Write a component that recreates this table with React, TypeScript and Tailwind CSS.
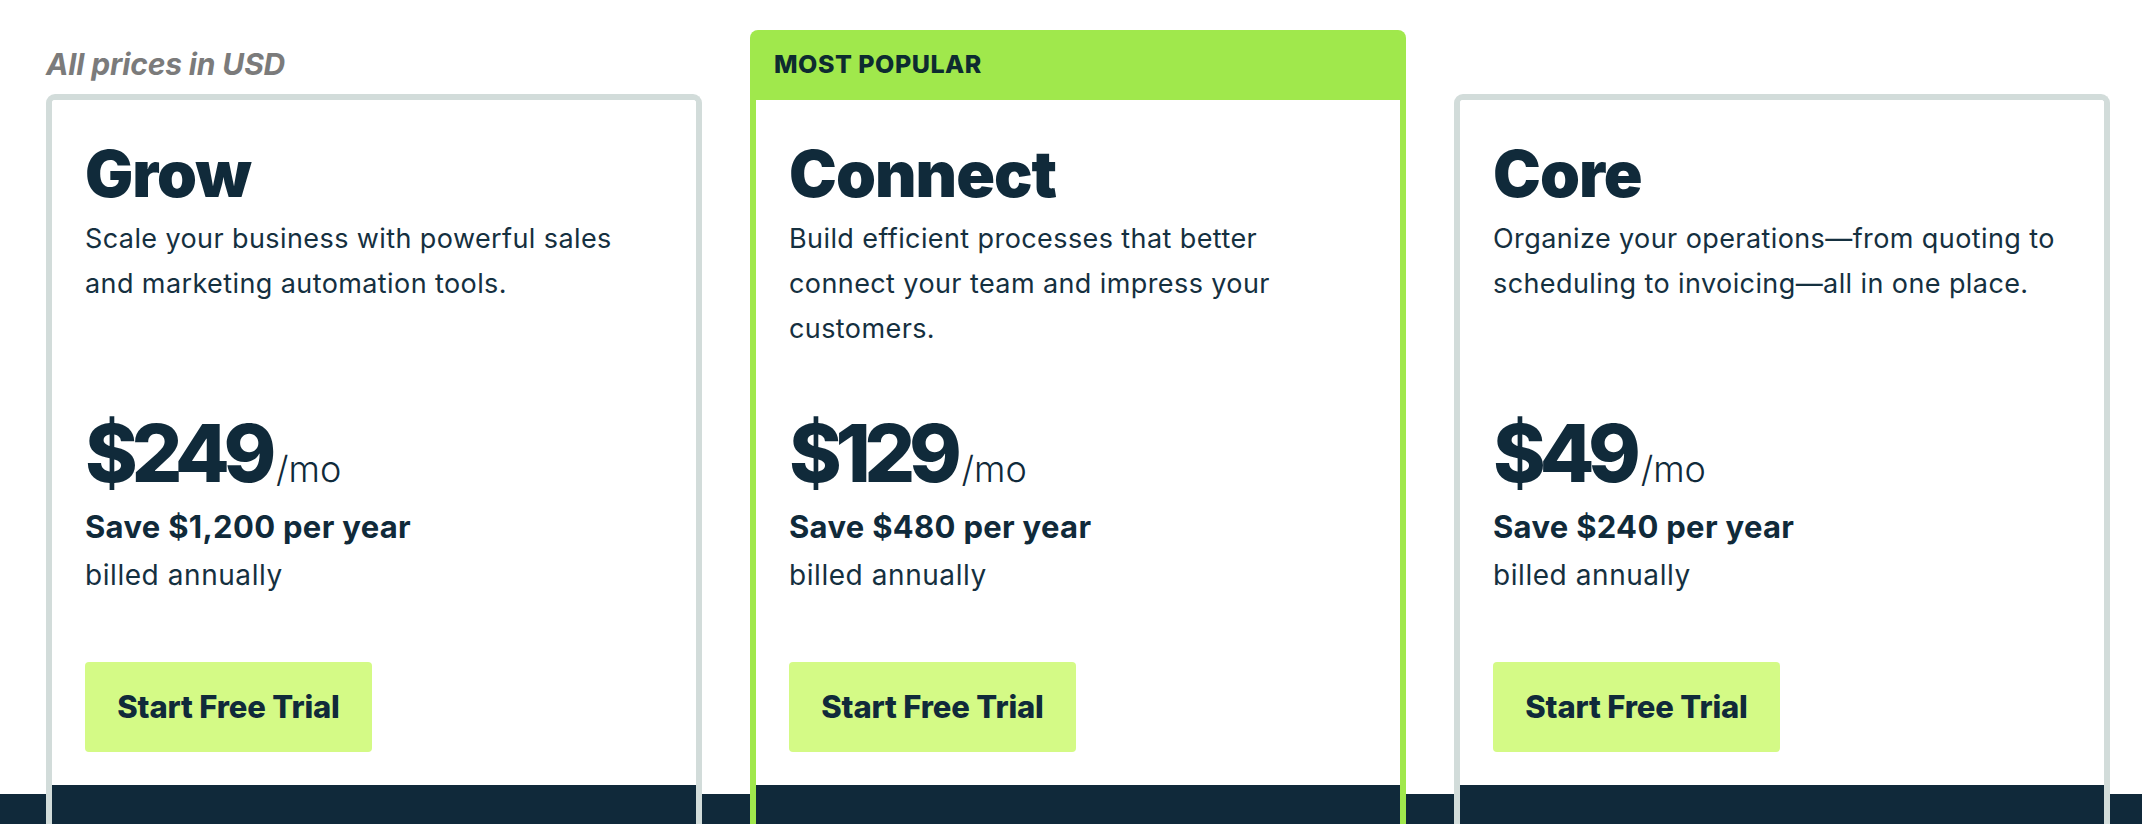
import React from "react";

type Plan = {
  name: string;
  desc: string;
  price: string;
  save: string;
  popular?: boolean;
};

const plans: Plan[] = [
  {
    name: "Grow",
    desc: "Scale your business with powerful sales and marketing automation tools.",
    price: "$249",
    save: "Save $1,200 per year",
  },
  {
    name: "Connect",
    desc: "Build efficient processes that better connect your team and impress your customers.",
    price: "$129",
    save: "Save $480 per year",
    popular: true,
  },
  {
    name: "Core",
    desc: "Organize your operations\u2014from quoting to scheduling to invoicing\u2014all in one place.",
    price: "$49",
    save: "Save $240 per year",
  },
];

function CardBody({ plan }: { plan: Plan }) {
  return (
    <div className="flex flex-col bg-white">
      <div className="flex flex-col px-[33px] pt-[42px]">
        <h2 className="text-[64px] leading-[64px] font-black tracking-[-0.015em] text-[#102a3a]">
          {plan.name}
        </h2>
        <p className="mt-[10px] h-[135px] w-[572px] text-[27px] leading-[45px] tracking-[0.015em] text-[#15303f]">
          {plan.desc}
        </p>
        <div className="mt-[62px] flex items-baseline text-[#102a3a]">
          <span className="text-[80px] leading-[80px] font-extrabold tracking-[-0.08em]">
            {plan.price}
          </span>
          <span className="ml-[6px] text-[36px] leading-[36px] font-light">/mo</span>
        </div>
        <div className="mt-[10px] text-[31px] leading-[48px] font-bold tracking-[0.01em] text-[#102a3a]">
          {plan.save}
        </div>
        <div className="text-[28px] leading-[48px] tracking-[0.02em] text-[#15303f]">billed annually</div>
        <button className="mt-[63px] flex h-[90px] w-[287px] items-center justify-center rounded-[4px] bg-[#d4fa86] text-[31px] font-extrabold tracking-[-0.005em] text-[#102a3a]">
          Start Free Trial
        </button>
      </div>
      <div className="mt-[33px] h-[80px] bg-[#10293a]" />
    </div>
  );
}

export default function App() {
  return (
    <div
      className="h-[824px] w-[2142px] overflow-hidden bg-[linear-gradient(to_bottom,#ffffff_794px,#10293a_794px)]"
      style={{ fontFamily: "Inter, 'Noto Sans', sans-serif" }}
    >
      <div className="flex gap-[48px] pl-[46px] pt-[30px]">
        {/* Grow */}
        <div className="flex w-[656px] flex-col">
          <div className="mt-[17px] mb-[13px] text-[30px] leading-[34px] font-bold italic tracking-[-0.005em] text-[#7b7b7b]">
            All prices in USD
          </div>
          <div className="overflow-hidden rounded-t-[9px] border-[6px] border-b-0 border-[#d2dcda]">
            <CardBody plan={plans[0]} />
          </div>
        </div>

        {/* Connect */}
        <div className="flex w-[656px] flex-col">
          <div className="flex flex-col overflow-hidden rounded-t-[8px] bg-[#a0e84c] px-[6px]">
            <div className="flex h-[70px] items-center px-[18px] text-[25px] font-extrabold tracking-[0.02em] text-[#0d2b30]">
              MOST POPULAR
            </div>
            <CardBody plan={plans[1]} />
          </div>
        </div>

        {/* Core */}
        <div className="flex w-[656px] flex-col">
          <div className="h-[64px]" />
          <div className="overflow-hidden rounded-t-[9px] border-[6px] border-b-0 border-[#d2dcda]">
            <CardBody plan={plans[2]} />
          </div>
        </div>
      </div>
    </div>
  );
}
